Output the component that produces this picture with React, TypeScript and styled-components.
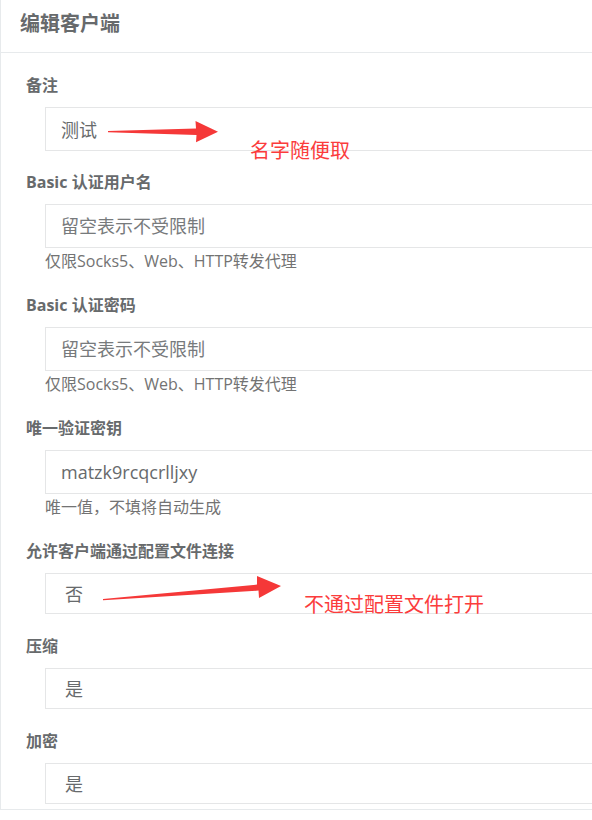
import React from "react";
import styled, { createGlobalStyle } from "styled-components";

const Global = createGlobalStyle`
  html, body { margin: 0; padding: 0; background: #fff; overflow: hidden; }
  body { font-family: "Open Sans", "Noto Sans CJK SC", sans-serif; }
  * { box-sizing: border-box; }
`;

const Page = styled.div`
  position: relative;
  width: 592px;
  height: 820px;
  overflow: hidden;
`;

const Panel = styled.div`
  width: 720px;
  border-left: 1px solid #e7eaec;
  border-bottom: 1px solid #e7eaec;
  background: #fff;
`;

const Header = styled.div`
  display: flex;
  align-items: center;
  height: 53px;
  padding: 0 19px 5px;
  border-bottom: 1px solid #e7eaec;
`;

const Title = styled.h5`
  margin: 0;
  font-family: "Open Sans", "Noto Sans CJK SC", sans-serif;
  font-size: 20px;
  font-weight: 700;
  line-height: 24px;
  color: #676a6c;
`;

const Body = styled.div`
  display: flex;
  flex-direction: column;
  padding: 21px 0 5px 25px;
`;

const Group = styled.div<{ $gap: number }>`
  display: flex;
  flex-direction: column;
  margin-bottom: ${(p) => p.$gap}px;
  &:last-child { margin-bottom: 0; }
`;

const Label = styled.label`
  font-size: 16px;
  font-weight: 700;
  line-height: 22px;
  color: #676a6c;
  margin-bottom: 11px;
`;

const Control = styled.div`
  display: flex;
  flex-direction: column;
  margin-left: 19px;
  width: 620px;
`;

const TextInput = styled.input`
  height: 44px;
  width: 100%;
  border: 1px solid #e5e6e7;
  border-radius: 0;
  padding: 0 15px;
  font-family: "Open Sans", "Noto Sans CJK SC", sans-serif;
  font-size: 18px;
  color: #676a6c;
  background: #fff;
  outline: none;
  &::placeholder { color: #777a7c; opacity: 1; }
`;

const Select = styled.select`
  height: 41px;
  width: 100%;
  border: 1px solid #e5e6e7;
  border-radius: 0;
  padding: 0 19px;
  font-family: "Open Sans", "Noto Sans CJK SC", sans-serif;
  font-size: 18px;
  color: #676a6c;
  background: #fff;
  appearance: none;
  outline: none;
`;

const Help = styled.span`
  margin: 2px 0 2px;
  font-size: 16px;
  line-height: 22px;
  color: #737373;
`;

const Overlay = styled.svg`
  position: absolute;
  left: 0;
  top: 0;
  pointer-events: none;
`;

const Note = styled.span<{ $x: number; $y: number }>`
  position: absolute;
  left: ${(p) => p.$x}px;
  top: ${(p) => p.$y}px;
  font-family: "Noto Sans CJK SC", sans-serif;
  font-size: 20px;
  line-height: 20px;
  color: #fb3c3c;
  white-space: nowrap;
`;

type Field =
  | { kind: "input"; label: string; value?: string; placeholder?: string; help?: string }
  | { kind: "select"; label: string; value: string };

const fields: Field[] = [
  { kind: "input", label: "备注", value: "测试" },
  { kind: "input", label: "Basic 认证用户名", placeholder: "留空表示不受限制", help: "仅限Socks5、Web、HTTP转发代理" },
  { kind: "input", label: "Basic 认证密码", placeholder: "留空表示不受限制", help: "仅限Socks5、Web、HTTP转发代理" },
  { kind: "input", label: "唯一验证密钥", value: "matzk9rcqcrlljxy", help: "唯一值，不填将自动生成" },
  { kind: "select", label: "允许客户端通过配置文件连接", value: "否" },
  { kind: "select", label: "压缩", value: "是" },
  { kind: "select", label: "加密", value: "是" },
];

export default function App() {
  return (
    <>
      <Global />
      <Page>
        <Panel>
          <Header>
            <Title>编辑客户端</Title>
          </Header>
          <Body>
            {fields.map((f, i) => (
              <Group key={i} $gap={f.kind === "select" ? 21 : 20}>
                <Label>{f.label}</Label>
                <Control>
                  {f.kind === "input" ? (
                    <>
                      <TextInput defaultValue={f.value} placeholder={f.placeholder} />
                      {f.help && <Help>{f.help}</Help>}
                    </>
                  ) : (
                    <Select defaultValue={f.value}>
                      <option value="是">是</option>
                      <option value="否">否</option>
                    </Select>
                  )}
                </Control>
              </Group>
            ))}
          </Body>
        </Panel>
        <Overlay width="592" height="820" viewBox="0 0 592 820">
          <path
            d="M108,131 L196,128.6 L195.5,121 L218,131.7 L196,142.2 L196.5,135 L108,132.3 Z"
            fill="#f53838"
          />
          <path
            d="M103,599 L257,584.6 L257,576 L281,586 L259,598 L258.5,590.6 L103,600.2 Z"
            fill="#f53838"
          />
        </Overlay>
        <Note $x={250} $y={140}>名字随便取</Note>
        <Note $x={304} $y={594}>不通过配置文件打开</Note>
      </Page>
    </>
  );
}
